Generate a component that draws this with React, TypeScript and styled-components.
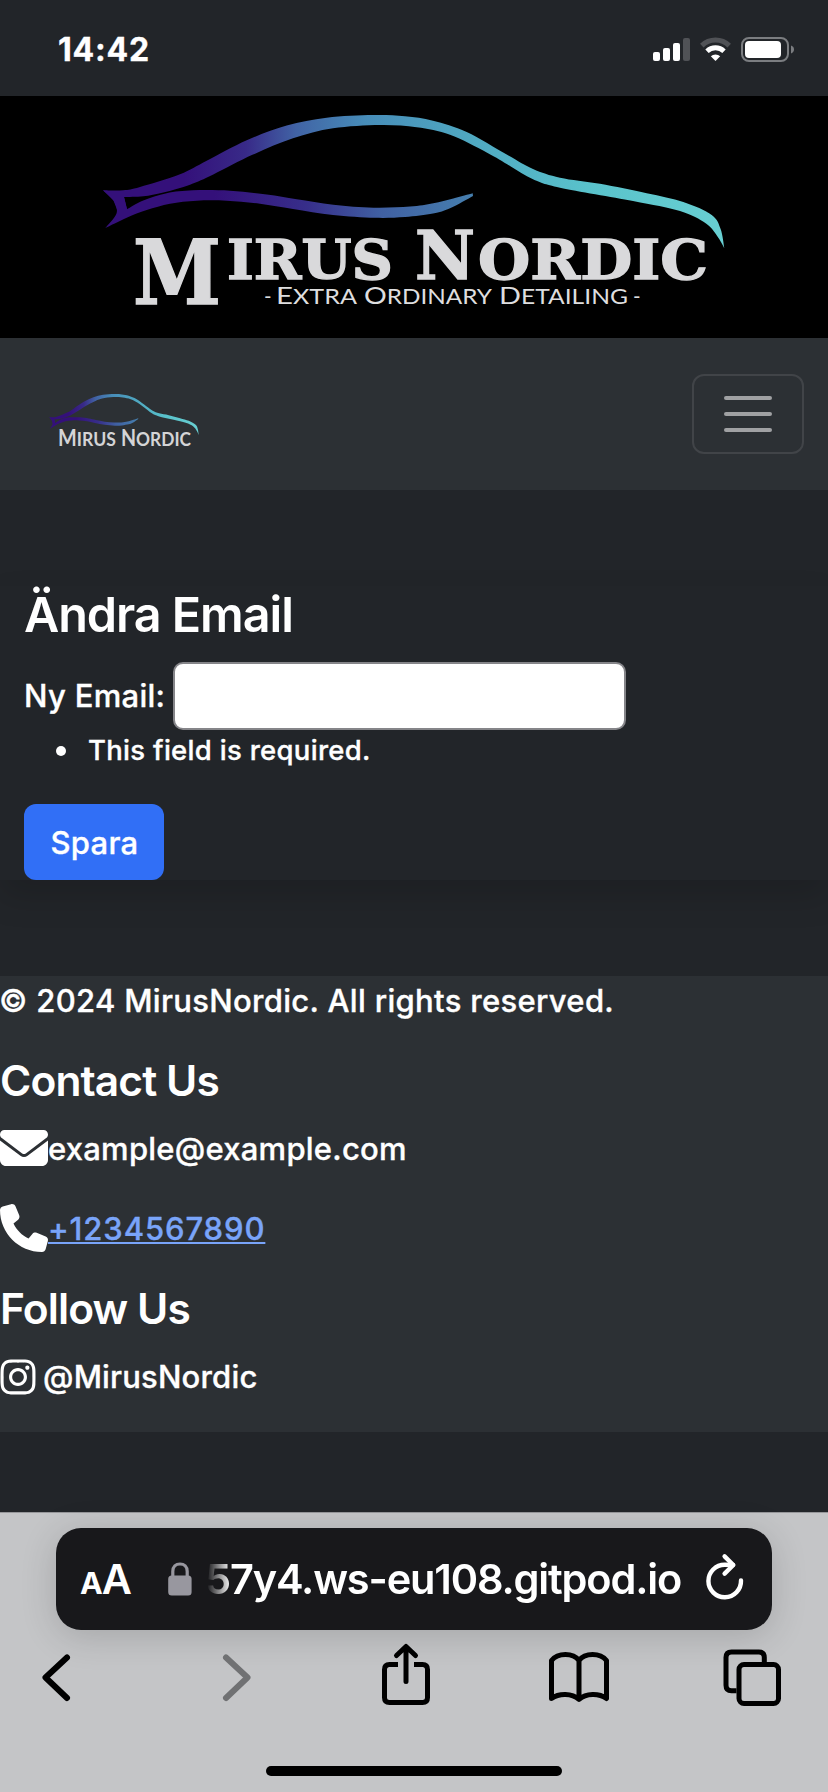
import React from 'react';
import styled, { createGlobalStyle } from 'styled-components';
import { FaEnvelope, FaInstagram, FaPhone } from 'react-icons/fa6';

const GlobalStyle = createGlobalStyle`
  *, *::before, *::after { box-sizing: border-box; }
  body {
    margin: 0;
    background: #222529;
    color: #fff;
    font-family: Inter, "Liberation Sans", sans-serif;
    font-size: 31px;
    font-weight: 500;
    -webkit-text-stroke: 0.35px currentColor;
  }
  svg { display: block; flex: none; overflow: visible; }
`;

const Screen = styled.div`
  display: flex;
  flex-direction: column;
  width: 828px;
  height: 1792px;
  overflow: hidden;
`;

/* ---------- status bar ---------- */

const StatusBar = styled.header`
  display: flex;
  justify-content: space-between;
  height: 96px;
  padding: 37px 34px 0 58px;
`;

const Clock = styled.time`
  font-size: 32px;
  font-weight: 700;
  line-height: 25px;
  letter-spacing: 0.8px;
`;

const StatusIcons = styled.div`
  display: flex;
  gap: 10px;
`;

/* ---------- logo banner and navbar ---------- */

const Banner = styled.div`
  height: 242px;
  background: #000;
`;

const Navbar = styled.nav`
  display: flex;
  align-items: center;
  justify-content: space-between;
  height: 152px;
  padding: 0 24px 0 48px;
  background: #2c3034;
`;

const Toggler = styled.button`
  display: flex;
  flex-direction: column;
  align-items: center;
  justify-content: center;
  gap: 12px;
  width: 112px;
  height: 80px;
  padding: 0;
  border: 2px solid #414448;
  border-radius: 12px;
  background: transparent;
`;

const TogglerLine = styled.span`
  width: 48px;
  height: 4px;
  border-radius: 2px;
  background: #a0a1a3;
`;

/* ---------- form ---------- */

const Main = styled.main`
  padding: 96px 0;
`;

const Card = styled.form`
  padding: 0 24px;
  background: #222529;
  box-shadow: 0 16px 32px rgba(0, 0, 0, 0.15);
`;

const Title = styled.h2`
  margin: 0 0 18px;
  font-size: 48.5px;
  font-weight: 600;
  line-height: 58px;
  letter-spacing: -1.05px;
  -webkit-text-stroke: 0;
`;

const Field = styled.div`
  display: flex;
  height: 68px;
`;

const Label = styled.label`
  width: 149px;
  line-height: 67px;
  letter-spacing: 0.3px;
  white-space: nowrap;
`;

const Input = styled.input`
  width: 453px;
  height: 68px;
  padding: 0 8px;
  border: 2px solid #858589;
  border-radius: 10px;
  background: #fff;
`;

const Errors = styled.ul`
  margin: 0 0 34px;
  padding: 0 0 0 32px;
  list-style: none;
  font-size: 27.5px;
  line-height: 40px;
  letter-spacing: 0.3px;
`;

const ErrorItem = styled.li`
  display: flex;
  align-items: center;
  gap: 22px;

  &::before {
    content: "";
    width: 10px;
    height: 10px;
    margin-top: 2px;
    border-radius: 50%;
    background: #fff;
  }
`;

const SaveButton = styled.button`
  display: block;
  width: 140px;
  height: 76px;
  padding: 0 0 0 1px;
  border: 0;
  border-radius: 12px;
  background: #316ff6;
  color: #fff;
  font: inherit;
  letter-spacing: 0.3px;
`;

/* ---------- footer ---------- */

const Footer = styled.footer`
  height: 456px;
  background: #2c3034;
`;

const Copyright = styled.p`
  margin: 0 0 30px;
  line-height: 50px;
  letter-spacing: 0.32px;
  text-indent: -1px;
`;

const SectionTitle = styled.h4`
  margin: 0 0 18px;
  font-size: 42.5px;
  font-weight: 600;
  line-height: 50px;
  letter-spacing: -0.9px;
  -webkit-text-stroke: 0;
`;

const ContactRow = styled.div<{ $gap?: number; $tracking: number }>`
  display: flex;
  align-items: center;
  gap: ${(p) => p.$gap ?? 0}px;
  height: 48px;
  margin-bottom: 32px;
  line-height: 46px;
  letter-spacing: ${(p) => p.$tracking}px;
`;

const ContactText = styled.span`
  padding-top: 2px;
`;

const PhoneLink = styled.a`
  padding-top: 2px;
  color: #79a4f9;
  text-decoration: underline;
  text-decoration-thickness: 2px;
  text-underline-offset: 2px;
  text-decoration-skip-ink: none;
`;

const InstagramMark = styled(FaInstagram)`
  margin: 2px -2.5px 0;
`;

/* ---------- browser bar ---------- */

const BrowserBar = styled.section`
  display: flex;
  flex-direction: column;
  height: 280px;
  margin-top: auto;
  border-top: 1px solid #96979a;
  background: #c4c5c7;
  -webkit-text-stroke: 0;
`;

const AddressBar = styled.div`
  display: flex;
  align-items: center;
  height: 102px;
  margin: 15px 56px 12px;
  padding: 0 28px 0 24px;
  border-radius: 25px;
  background: #18181b;
  box-shadow: 0 6px 36px rgba(0, 0, 0, 0.16);
`;

const TextSize = styled.span`
  display: flex;
  align-items: baseline;
  width: 88px;
  padding-top: 4px;
  font-size: 41.5px;
  font-weight: 600;
  line-height: 98px;
  letter-spacing: -1px;
`;

const SmallLetter = styled.span`
  font-size: 30.5px;
  font-weight: 700;
`;

const Url = styled.span`
  flex: 1;
  margin-left: 13px;
  overflow: hidden;
  font-size: 41.5px;
  font-weight: 600;
  line-height: 102px;
  letter-spacing: -1.15px;
  white-space: nowrap;
  mask-image: linear-gradient(to right, transparent 2px, #000 26px);
`;

const Toolbar = styled.div`
  display: flex;
  justify-content: space-between;
  padding: 0 46px 0 26px;
`;

const HomeIndicator = styled.div`
  width: 296px;
  height: 10px;
  margin: 56px auto 0;
  border-radius: 5px;
  background: #000;
`;

/* ---------- drawings ---------- */

type Point = [number, number];

/* Continues a path through the points with Catmull-Rom curves. */
const curve = (pts: Point[]) =>
  pts
    .slice(0, -1)
    .map((p, i) => {
      const prev = pts[i - 1] ?? p;
      const next = pts[i + 1];
      const after = pts[i + 2] ?? next;
      const c1 = [p[0] + (next[0] - prev[0]) / 6, p[1] + (next[1] - prev[1]) / 6];
      const c2 = [next[0] - (after[0] - p[0]) / 6, next[1] - (after[1] - p[1]) / 6];
      return `C${[...c1, ...c2, ...next].map((n) => n.toFixed(1)).join(' ')}`;
    })
    .join('');

const roofTop: Point[] = [
  [103, 190.3], [123.3, 190.3], [140, 187], [180, 174.3], [206.7, 160.8], [246.7, 140.3],
  [286.7, 125.6], [326.7, 117.7], [373.3, 115], [405, 116.3], [433, 120.7], [466.7, 132],
  [506.7, 154.5], [533, 169], [560, 177.7], [600, 183.8], [646.7, 193.3], [683.3, 202],
  [711.7, 215], [720.7, 229.3], [724.3, 248.3],
];
const roofUnder: Point[] = [
  [724.3, 248.3], [718.3, 237.7], [706, 223.5], [680, 211], [633, 201], [560, 187.7],
  [533, 179.3], [510, 166], [486.7, 152.5], [450, 134.8], [416.7, 127.3], [380, 125],
  [333, 128.3], [293, 138.3], [253, 154.6], [213.3, 174.5], [190, 184.7], [163.3, 192.5],
  [143.3, 196.3], [124, 197],
];
const sillTop: Point[] = [
  [127, 209.3], [143.3, 200.6], [166.7, 193.2], [193, 190.3], [230, 190.7], [266.7, 194.5],
  [296.7, 199.3], [333.3, 204.7], [373.3, 207.7], [410, 206.6], [433.3, 203.3], [453.3, 198.5],
  [472.7, 193.3],
];
const sillUnder: Point[] = [
  [473, 196], [450, 208.3], [433, 213.5], [405, 217], [375, 217.8], [333, 215],
  [293, 208.9], [260, 203.7], [226.7, 200.7], [196.7, 200.7], [170, 203.7], [146.7, 210],
  [126.7, 217.7], [105.3, 228],
];
const tailEdge: Point[] = [[105.3, 228], [116.5, 213.5], [113.5, 200.5], [103, 190.3]];

const roofPath = `M103 190.3${curve(roofTop)}${curve(roofUnder)}L127 209.3L118 212L113.5 200.5Z`;
const sillPath = `M127 209.3${curve(sillTop)}L473 196${curve(sillUnder)}${curve(tailEdge)}L124 197Z`;

const CarOutline = ({ id }: { id: string }) => (
  <>
    <defs>
      <linearGradient id={`${id}-roof`} gradientUnits="userSpaceOnUse" x1="103" y1="0" x2="725" y2="0">
        <stop offset="0.13" stopColor="#34107a" />
        <stop offset="0.23" stopColor="#382a88" />
        <stop offset="0.31" stopColor="#4163a5" />
        <stop offset="0.42" stopColor="#478cb8" />
        <stop offset="0.6" stopColor="#50aac2" />
        <stop offset="0.78" stopColor="#59c2cb" />
        <stop offset="1" stopColor="#68cfd2" />
      </linearGradient>
      <linearGradient id={`${id}-sill`} gradientUnits="userSpaceOnUse" x1="103" y1="0" x2="473" y2="0">
        <stop offset="0.3" stopColor="#34107a" />
        <stop offset="0.55" stopColor="#372e8a" />
        <stop offset="0.75" stopColor="#4060a2" />
        <stop offset="1" stopColor="#467fae" />
      </linearGradient>
    </defs>
    <path d={roofPath} fill={`url(#${id}-roof)`} />
    <path d={sillPath} fill={`url(#${id}-sill)`} />
  </>
);

const Wordmark = styled.text`
  font-family: "DejaVu Serif", serif;
  font-weight: 700;
  fill: #d9d9db;
  stroke: #d9d9db;
  stroke-width: 1.4px;
`;

const Tagline = styled.text`
  font-family: Lato, sans-serif;
  font-size: 20.5px;
  font-weight: 400;
  fill: #dededf;
  -webkit-text-stroke: 0;
`;

const NavMark = styled.text`
  font-family: Lato, sans-serif;
  font-size: 19.5px;
  font-weight: 700;
  fill: #d4d4d6;
  -webkit-text-stroke: 0;
`;

const stretch = { lengthAdjust: 'spacingAndGlyphs' as const };

const BannerLogo = () => (
  <svg width="828" height="242" viewBox="0 96 828 242">
    <CarOutline id="banner" />
    <Wordmark x="133" y="303.5" fontSize="89" textLength="88" {...stretch}>M</Wordmark>
    <Wordmark x="227" y="278.5" fontSize="55" textLength="166" {...stretch}>IRUS</Wordmark>
    <Wordmark x="415" y="278.5" fontSize="67" textLength="60" {...stretch}>N</Wordmark>
    <Wordmark x="478" y="278.5" fontSize="55" textLength="230" {...stretch}>ORDIC</Wordmark>
    <Tagline x="264" y="304">-</Tagline>
    <Tagline x="276" y="304" textLength="81" {...stretch}><tspan fontSize="24">E</tspan>XTRA</Tagline>
    <Tagline x="364" y="304" textLength="128" {...stretch}><tspan fontSize="24">O</tspan>RDINARY</Tagline>
    <Tagline x="499" y="304" textLength="129" {...stretch}><tspan fontSize="24">D</tspan>ETAILING</Tagline>
    <Tagline x="633" y="304">-</Tagline>
  </svg>
);

const NavLogo = () => (
  <svg width="152" height="56" viewBox="48 386 152 56">
    <g transform="translate(24.5 358.6) scale(0.2405 0.308)">
      <CarOutline id="nav" />
    </g>
    <NavMark x="58" y="446" textLength="58" {...stretch}><tspan fontSize="22">M</tspan>IRUS</NavMark>
    <NavMark x="121" y="446" textLength="70" {...stretch}><tspan fontSize="22">N</tspan>ORDIC</NavMark>
  </svg>
);

const SignalIcon = () => (
  <svg width="37" height="25" fill="#fff">
    <rect x="0" y="15" width="7" height="9" rx="2" />
    <rect x="10" y="11" width="7" height="13" rx="2" />
    <rect x="20" y="6" width="7" height="18" rx="2" />
    <rect x="30" y="1" width="7" height="23" rx="2" fill="#505256" />
  </svg>
);

const WifiIcon = () => (
  <svg width="31" height="25" fill="none">
    <path d="M1.8 8.6A19.5 19.5 0 0 1 29.2 8.6" stroke="#505256" strokeWidth="5" />
    <path d="M7 14.2A12.2 12.2 0 0 1 24 14.2" stroke="#fff" strokeWidth="4.8" />
    <path d="M15.5 24L10.8 19.3A6.8 6.8 0 0 1 20.2 19.3Z" fill="#fff" />
  </svg>
);

const BatteryIcon = () => (
  <svg width="53" height="25" fill="none">
    <rect x="1" y="1" width="46" height="23" rx="7" stroke="#7b7d80" strokeWidth="2" />
    <rect x="4" y="4" width="36" height="17" rx="4" fill="#fff" />
    <path d="M50 8.5C52.2 9.2 53 10.8 53 12.5S52.2 15.8 50 16.5Z" fill="#7b7d80" />
  </svg>
);

const LockIcon = () => (
  <svg width="24" height="34" viewBox="0 0 24 34">
    <path d="M4.8 15V9.5C4.8 4.8 7.8 2 12 2S19.2 4.8 19.2 9.5V15" fill="none" stroke="#98979f" strokeWidth="3.2" />
    <rect x="0.2" y="13.5" width="23.4" height="20" rx="3.5" fill="#98979f" />
  </svg>
);

const ReloadIcon = () => (
  <svg width="38" height="50" viewBox="0 0 38 50" fill="none" stroke="#fff" strokeWidth="4.4" strokeLinecap="round" strokeLinejoin="round">
    <path d="M35 26.5A16.3 16.3 0 1 1 18.8 10.7L27 11" />
    <path d="M18.6 2.4L27.3 11L18.6 19.6" />
  </svg>
);

const ToolIcon = styled.svg.attrs({ width: 60, height: 68, viewBox: '0 0 60 68' })`
  fill: none;
  stroke: #000;
  stroke-width: 5px;
  stroke-linecap: round;
  stroke-linejoin: round;
`;

const Chevron = styled.path<{ $muted?: boolean }>`
  stroke: ${(p) => (p.$muted ? '#707173' : '#000')};
  stroke-width: 6px;
`;

export default function App() {
  return (
    <Screen>
      <GlobalStyle />
      <StatusBar>
        <Clock>14:42</Clock>
        <StatusIcons>
          <SignalIcon />
          <WifiIcon />
          <BatteryIcon />
        </StatusIcons>
      </StatusBar>

      <Banner><BannerLogo /></Banner>

      <Navbar>
        <NavLogo />
        <Toggler aria-label="Menu">
          <TogglerLine />
          <TogglerLine />
          <TogglerLine />
        </Toggler>
      </Navbar>

      <Main>
        <Card>
          <Title>Ändra Email</Title>
          <Field>
            <Label htmlFor="email">Ny Email:</Label>
            <Input id="email" type="email" />
          </Field>
          <Errors>
            <ErrorItem>This field is required.</ErrorItem>
          </Errors>
          <SaveButton type="button">Spara</SaveButton>
        </Card>
      </Main>

      <Footer>
        <Copyright>© 2024 MirusNordic. All rights reserved.</Copyright>
        <SectionTitle>Contact Us</SectionTitle>
        <ContactRow $tracking={0.24}>
          <FaEnvelope size={48} />
          <ContactText>example@example.com</ContactText>
        </ContactRow>
        <ContactRow $tracking={0.9}>
          <FaPhone size={48} />
          <PhoneLink href="tel:+1234567890">+1234567890</PhoneLink>
        </ContactRow>
        <SectionTitle>Follow Us</SectionTitle>
        <ContactRow $tracking={0.18} $gap={8}>
          <InstagramMark size={40} />
          <ContactText>@MirusNordic</ContactText>
        </ContactRow>
      </Footer>

      <BrowserBar>
        <AddressBar>
          <TextSize><SmallLetter>A</SmallLetter>A</TextSize>
          <LockIcon />
          <Url>57y4.ws-eu108.gitpod.io</Url>
          <ReloadIcon />
        </AddressBar>
        <Toolbar>
          <ToolIcon><Chevron d="M41 15.5L19.5 35.5L41 56" /></ToolIcon>
          <ToolIcon><Chevron $muted d="M26 15.5L47.5 35.5L26 56" /></ToolIcon>
          <ToolIcon>
            <path strokeLinecap="butt" d="M24 22.5H15.5Q10.5 22.5 10.5 27.5V55.5Q10.5 60.5 15.5 60.5H48.5Q53.5 60.5 53.5 55.5V27.5Q53.5 22.5 48.5 22.5H40" />
            <path d="M32 39.5V5M22.5 13.5L32 4.5L41.5 13.5" />
          </ToolIcon>
          <ToolIcon>
            <path d="M31 18.5C25 10.5 10 10.5 3.5 18.5V56.5C11 51 24 51 31 57.5C38 51 51 51 58.5 56.5V18.5C52 10.5 37 10.5 31 18.5ZV57" />
          </ToolIcon>
          <ToolIcon>
            <path strokeLinecap="butt" d="M14.5 48.8H9.5Q4 48.8 4 43.3V15.5Q4 10 9.5 10H36.8Q42.3 10 42.3 15.5V20" />
            <rect x="17" y="22.5" width="39.5" height="39" rx="5" />
          </ToolIcon>
        </Toolbar>
        <HomeIndicator />
      </BrowserBar>
    </Screen>
  );
}
